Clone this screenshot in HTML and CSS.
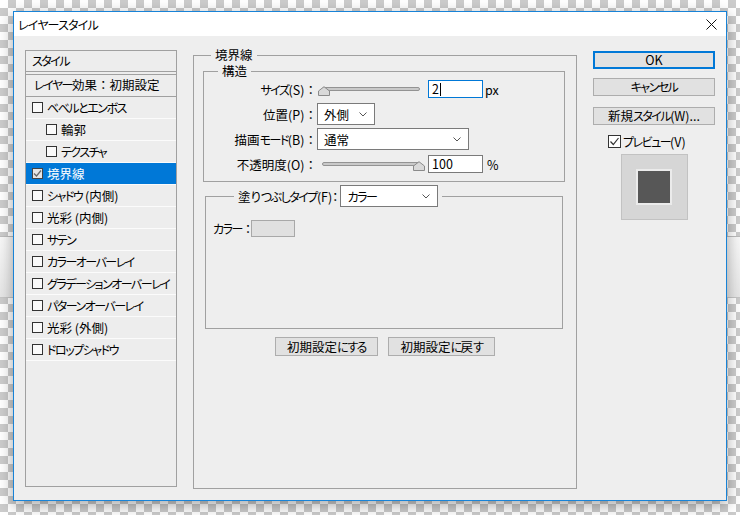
FILE: index.html
```html
<!DOCTYPE html>
<html lang="ja">
<head>
<meta charset="utf-8">
<title>レイヤースタイル</title>
<link rel="stylesheet" href="styles.css">
</head>
<body>
<div class="band"></div>
<div class="window">
  <div class="titlebar">
    <span class="title">レイヤースタイル</span>
    <svg class="close" width="11" height="11" viewBox="0 0 11 11"><path d="M0.5 0.5L10.5 10.5M10.5 0.5L0.5 10.5" stroke="#111" stroke-width="1" fill="none"/></svg>
  </div>
  <div class="content">
    <div class="list">
      <div class="list-head"><span class="k">スタイル</span></div>
      <div class="list-sub"><span class="k">レイヤー</span>効果<span class="c">：</span>初期設定</div>
      <div class="item"><span class="cb"></span><span class="k">ベベルとエンボス</span></div>
      <div class="item indent"><span class="cb"></span>輪郭</div>
      <div class="item indent"><span class="cb"></span><span class="k">テクスチャ</span></div>
      <div class="item selected"><span class="cb on"><svg width="9" height="9" viewBox="0 0 9 9"><path d="M1 4.5L3.5 7L8 1.5" stroke="#6a6a6a" stroke-width="1.3" fill="none"/></svg></span>境界線</div>
      <div class="item"><span class="cb"></span><span class="k">シャドウ</span>&nbsp;(内側)</div>
      <div class="item"><span class="cb"></span>光彩&nbsp;(内側)</div>
      <div class="item"><span class="cb"></span><span class="k">サテン</span></div>
      <div class="item"><span class="cb"></span><span class="k">カラーオーバーレイ</span></div>
      <div class="item"><span class="cb"></span><span class="k">グラデーションオーバーレイ</span></div>
      <div class="item"><span class="cb"></span><span class="k">パターンオーバーレイ</span></div>
      <div class="item"><span class="cb"></span>光彩&nbsp;(外側)</div>
      <div class="item"><span class="cb"></span><span class="k">ドロップシャドウ</span></div>
    </div>

    <fieldset class="outer">
      <legend>境界線</legend>
      <fieldset class="struct">
        <legend>構造</legend>
        <div class="form">
          <div class="row">
            <span class="lbl"><span class="k">サイズ</span>(S)<span class="c">：</span></span>
            <div class="slider">
              <div class="track"></div>
              <svg class="thumb thumb-min" width="12" height="10" viewBox="0 0 12 10"><path d="M0.5 9.5V5L6 0.7L11.5 5V9.5Z" fill="#d9d9d9" stroke="#8a8a8a" stroke-width="1"/></svg>
            </div>
            <div class="num focus">2<span class="caret"></span></div>
            <span class="unit">px</span>
          </div>
          <div class="row">
            <span class="lbl">位置(P)<span class="c">：</span></span>
            <div class="select sel-pos"><span>外側</span><svg width="8" height="5" viewBox="0 0 8 5"><path d="M0.5 0.5L4 4L7.5 0.5" stroke="#555" fill="none"/></svg></div>
          </div>
          <div class="row">
            <span class="lbl">描画<span class="k">モード</span>(B)<span class="c">：</span></span>
            <div class="select sel-mode"><span>通常</span><svg width="8" height="5" viewBox="0 0 8 5"><path d="M0.5 0.5L4 4L7.5 0.5" stroke="#555" fill="none"/></svg></div>
          </div>
          <div class="row">
            <span class="lbl">不透明度(O)<span class="c">：</span></span>
            <div class="slider">
              <div class="track"></div>
              <svg class="thumb thumb-max" width="12" height="10" viewBox="0 0 12 10"><path d="M0.5 9.5V5L6 0.7L11.5 5V9.5Z" fill="#d9d9d9" stroke="#8a8a8a" stroke-width="1"/></svg>
            </div>
            <div class="num">100</div>
            <span class="unit pct">%</span>
          </div>
        </div>
      </fieldset>

      <fieldset class="fill">
        <legend><div class="fill-legend"><span>塗り<span class="k">つぶしタイプ</span>(F)：</span><div class="select sel-fill"><span class="k">カラー</span><svg width="8" height="5" viewBox="0 0 8 5"><path d="M0.5 0.5L4 4L7.5 0.5" stroke="#555" fill="none"/></svg></div></div></legend>
        <div class="fill-body">
          <div class="color-row"><span class="clbl"><span class="k">カラー</span><span class="c">：</span></span><span class="swatch"></span></div>
        </div>
      </fieldset>

      <div class="btns">
        <button class="btn b1">初期設定<span class="k">にする</span></button>
        <button class="btn b2">初期設定<span class="k">に</span>戻<span class="k">す</span></button>
      </div>
    </fieldset>

    <div class="side">
      <button class="btn ok">OK</button>
      <button class="btn cancel"><span class="k">キャンセル</span></button>
      <button class="btn newstyle">新規<span class="k">スタイル</span>(W)...</button>
      <div class="pv-check"><span class="cb2"><svg width="11" height="11" viewBox="0 0 11 11"><path d="M1.5 5.5L4.3 8.5L9.5 2" stroke="#333" stroke-width="1.2" fill="none"/></svg></span><span class="k">プレビュー</span>(V)</div>
      <div class="preview"><div class="ring"><div class="dark"></div></div></div>
    </div>
  </div>
</div>
</body>
</html>
```

FILE: styles.css
```css
* { box-sizing: border-box; }
html, body { margin: 0; padding: 0; }
body {
  width: 740px;
  height: 515px;
  overflow: hidden;
  position: relative;
  padding: 11px 0 0 13px;
  font-family: "Noto Sans CJK JP", "Noto Sans", sans-serif;
  font-size: 12.5px;
  font-feature-settings: "palt";
  color: #000;
  background-color: #ffffff;
  background-image:
    linear-gradient(45deg, #cccccc 25%, transparent 25%, transparent 75%, #cccccc 75%),
    linear-gradient(45deg, #cccccc 25%, transparent 25%, transparent 75%, #cccccc 75%);
  background-size: 16px 16px;
  background-position: 0 0, 8px 8px;
}
.k {
  font-size: 12px;
  letter-spacing: -1.5px;
}
.c {
  font-feature-settings: normal;
}
.band {
  position: absolute;
  left: 0;
  right: 0;
  top: 236px;
  height: 62px;
  background: linear-gradient(#f8f8f8, #e6e6e6);
  border-top: 1px solid #bcbcbc;
  border-bottom: 1px solid #c6c6c6;
}
.window {
  position: relative;
  width: 714px;
  height: 490px;
  border: 1px solid #1883d7;
  background: #eeeeee;
  box-shadow: 0 4px 14px rgba(0,0,0,0.35);
  display: flex;
  flex-direction: column;
}
.titlebar {
  height: 24px;
  background: #ffffff;
  display: flex;
  align-items: center;
  justify-content: space-between;
  padding: 0 9px 0 4px;
  flex: none;
}
.title { font-size: 12px; letter-spacing: -0.8px; }
.content {
  display: flex;
  align-items: flex-start;
  gap: 16px;
  padding: 14px 11px 0 11px;
}

/* left list */
.list {
  width: 152px;
  height: 437px;
  flex: none;
  border: 1px solid #a0a0a0;
  background: #ededed;
}
.list-head {
  height: 21px;
  line-height: 19px;
  padding-left: 6px;
  border-bottom: 1px solid #a0a0a0;
}
.list-sub {
  margin-top: 2px;
  height: 23px;
  line-height: 19px;
  padding-left: 8px;
  border-top: 1px solid #a0a0a0;
  border-bottom: 1px solid #a0a0a0;
  white-space: nowrap;
}
.item {
  height: 22px;
  display: flex;
  align-items: center;
  padding-left: 6px;
  border-bottom: 1px solid #fbfbfb;
  white-space: nowrap;
}
.item.indent { padding-left: 20px; }
.item.selected { background: #0078d7; color: #fff; }
.cb {
  width: 11px;
  height: 11px;
  border: 1px solid #333;
  background: #fafafa;
  margin-right: 4px;
  flex: none;
  display: flex;
  align-items: center;
  justify-content: center;
}
.cb.on { background: #e6e6e6; border-color: #444; }

/* center */
fieldset {
  margin: 0;
  padding: 0;
  border: 1px solid #a0a0a0;
  min-width: 0;
}
legend {
  padding: 0 4px;
  line-height: 14px;
}
.outer {
  width: 384px;
  height: 441px;
  margin-top: -2px;
  flex: none;
}
.outer > legend { margin-left: 17px; }
.struct {
  margin: 2px 11px 0 9px;
  padding: 1px 0 7px 0;
}
.struct > legend { margin-left: 14px; }
.form {
  display: flex;
  flex-direction: column;
  gap: 5px;
}
.row {
  display: flex;
  align-items: center;
  height: 20px;
}
.lbl {
  width: 113px;
  text-align: right;
  white-space: nowrap;
  flex: none;
}
.slider {
  position: relative;
  width: 108px;
  height: 20px;
  margin-left: 1px;
  display: flex;
  align-items: center;
  flex: none;
}
.track {
  margin-left: 4px;
  width: 98px;
  height: 4px;
  border-radius: 2px;
  background: #c9c9c9;
  border: 1px solid #939393;
}
.thumb { position: absolute; top: 7px; }
.thumb-min { left: 0; }
.thumb-max { left: 95px; }
.num {
  width: 55px;
  height: 18px;
  margin-left: 2px;
  border: 1px solid #7a7a7a;
  background: #fff;
  padding-left: 3px;
  line-height: 16px;
  display: flex;
  align-items: center;
  flex: none;
}
.num.focus { border-color: #0078d7; }
.caret {
  display: inline-block;
  width: 1px;
  height: 13px;
  background: #000;
  margin-left: 1px;
}
.unit { margin-left: 2px; }
.unit.pct { margin-left: 4px; }
.select {
  display: flex;
  align-items: center;
  justify-content: space-between;
  height: 22px;
  border: 1px solid #7a7a7a;
  background: #fff;
  padding: 0 7px 0 6px;
  flex: none;
}
.sel-pos { width: 58px; }
.sel-mode { width: 152px; }
.sel-fill { width: 98px; margin-left: 2px; }

.fill {
  margin: 3px 13px 0 11px;
  padding: 0;
}
.fill > legend { margin-left: 28px; padding: 0 4px; line-height: normal; }
.fill-legend {
  display: flex;
  align-items: center;
  height: 22px;
  white-space: nowrap;
}
.fill-body {
  height: 121px;
  padding: 12px 0 0 7px;
}
.color-row {
  display: flex;
  align-items: center;
  height: 18px;
}
.clbl { width: 38px; white-space: nowrap; }
.swatch {
  width: 44px;
  height: 17px;
  background: #e0e0e0;
  border: 1px solid #a8a8a8;
}
.btns {
  display: flex;
  justify-content: center;
  gap: 10px;
  margin-top: 8px;
}
.btn {
  font: inherit;
  color: #000;
  background: #e1e1e1;
  border: 1px solid #adadad;
  padding: 0;
  margin: 0;
  height: 19px;
  line-height: 17px;
  white-space: nowrap;
}
.b1 { width: 103px; }
.b2 { width: 107px; }

/* right side */
.side {
  width: 122px;
  flex: none;
  display: flex;
  flex-direction: column;
}
.side .btn { width: 122px; height: 18px; line-height: 16px; }
.side .ok { margin-top: 1px; border: 2px solid #0078d7; line-height: 14px; }
.side .cancel { margin-top: 9px; }
.side .newstyle { margin-top: 11px; }
.pv-check {
  margin-top: 10px;
  height: 13px;
  padding-left: 15px;
  display: flex;
  align-items: center;
  white-space: nowrap;
}
.cb2 {
  width: 13px;
  height: 13px;
  border: 1px solid #333;
  background: #fff;
  margin-right: 2px;
  display: flex;
  align-items: center;
  justify-content: center;
  flex: none;
}
.preview {
  margin-top: 6px;
  align-self: center;
  width: 67px;
  height: 66px;
  background: #d6d6d6;
  border: 1px solid #c2c2c2;
  display: flex;
  align-items: center;
  justify-content: center;
}
.ring {
  width: 36px;
  height: 36px;
  background: #ebebeb;
  padding: 2px;
}
.dark {
  width: 32px;
  height: 32px;
  background: #575757;
}
```
